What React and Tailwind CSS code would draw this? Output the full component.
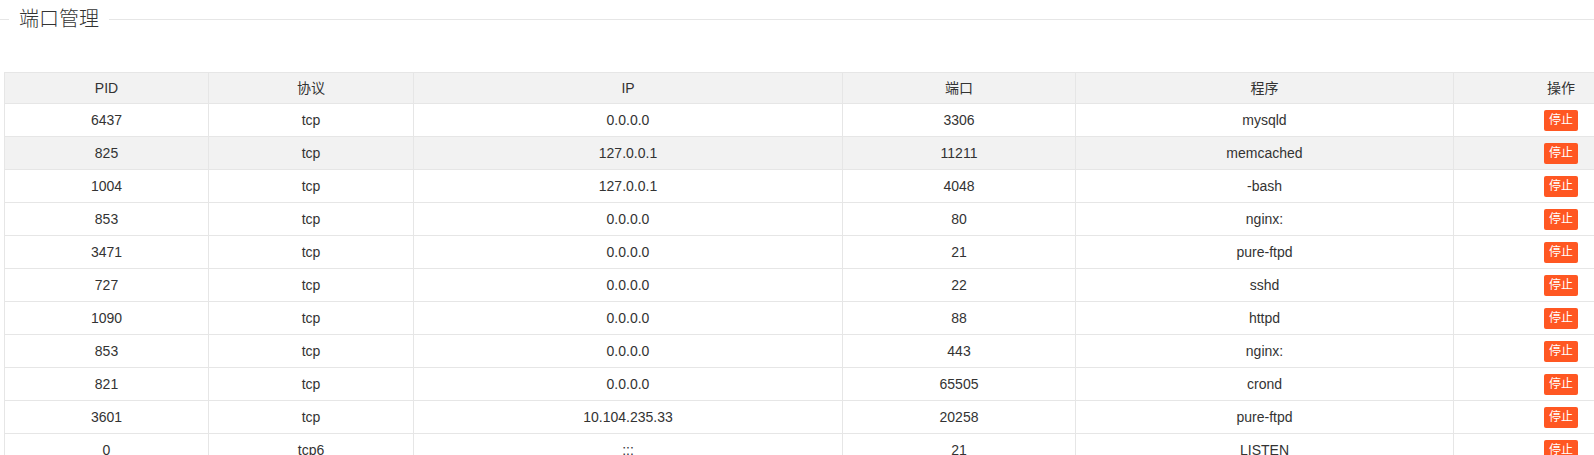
import React from "react";

const rows = [
  ["6437", "tcp", "0.0.0.0", "3306", "mysqld"],
  ["825", "tcp", "127.0.0.1", "11211", "memcached"],
  ["1004", "tcp", "127.0.0.1", "4048", "-bash"],
  ["853", "tcp", "0.0.0.0", "80", "nginx:"],
  ["3471", "tcp", "0.0.0.0", "21", "pure-ftpd"],
  ["727", "tcp", "0.0.0.0", "22", "sshd"],
  ["1090", "tcp", "0.0.0.0", "88", "httpd"],
  ["853", "tcp", "0.0.0.0", "443", "nginx:"],
  ["821", "tcp", "0.0.0.0", "65505", "crond"],
  ["3601", "tcp", "10.104.235.33", "20258", "pure-ftpd"],
  ["0", "tcp6", ":::", "21", "LISTEN"],
];

const headers = ["PID", "协议", "IP", "端口", "程序", "操作"];

function App() {
  return (
    <div className="h-[455px] w-[1594px] overflow-hidden bg-white text-[#333] font-['Liberation_Sans','Noto_Sans_CJK_SC',sans-serif]">
      <div className="flex h-[38px] items-center">
        <div className="h-px w-[9px] bg-[#e6e6e6]"></div>
        <div className="px-[10px] text-[20px] leading-[24px] font-light">端口管理</div>
        <div className="h-px flex-1 bg-[#e6e6e6]"></div>
      </div>

      <div className="mt-[34px] ml-1">
        <table className="table-fixed border-collapse w-[1664px] text-[14px]">
          <colgroup>
            <col className="w-[204px]" />
            <col className="w-[205px]" />
            <col className="w-[429px]" />
            <col className="w-[233px]" />
            <col className="w-[378px]" />
            <col className="w-[215px]" />
          </colgroup>
          <thead>
            <tr className="bg-[#f2f2f2]">
              {headers.map((h) => (
                <th key={h} className="h-[31px] border border-[#e6e6e6] p-0 text-center font-normal">
                  {h}
                </th>
              ))}
            </tr>
          </thead>
          <tbody>
            {rows.map((r, i) => (
              <tr key={i} className={i === 1 ? "bg-[#f2f2f2]" : "bg-white"}>
                {r.map((c, j) => (
                  <td key={j} className="h-[33px] border border-[#e6e6e6] p-0 text-center">
                    {c}
                  </td>
                ))}
                <td className="h-[33px] border border-[#e6e6e6] p-0 text-center">
                  <button className="inline-flex h-[21px] w-[34px] items-center justify-center rounded-[2px] bg-[#ff5722] text-[12px] text-white align-middle">
                    停止
                  </button>
                </td>
              </tr>
            ))}
          </tbody>
        </table>
      </div>
    </div>
  );
}

export default App;
